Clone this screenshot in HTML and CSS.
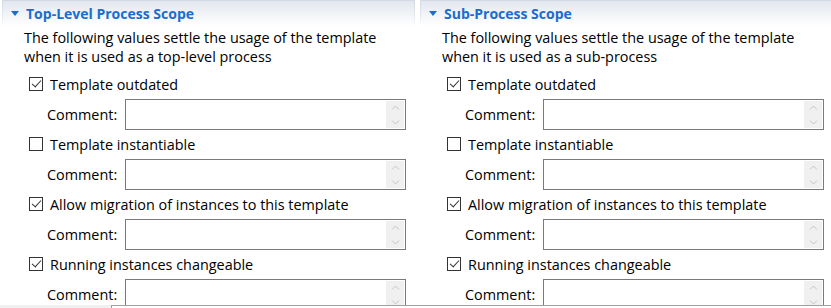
FILE: index.html
```html
<!doctype html>
<html lang="en">
<head>
<meta charset="utf-8" />
<title>Template Scope</title>
<link rel="stylesheet" href="styles.css">
</head>
<body>
<div class="scopes">
  <!-- Top-level scope -->
  <section class="scope">
    <div class="scope-head">
      <svg class="twisty" width="8" height="5" viewBox="0 0 8 5"><path d="M0 0h8L4 5z" /></svg>
      <span>Top-Level Process Scope</span>
    </div>
    <div class="scope-body">
      <p class="desc">The following values settle the usage of the template<br>when it is used as a top-level process</p>
      <div class="opt">
        <label class="check"><span class="box on"></span>Template outdated</label>
        <div class="comment"><span>Comment:</span><div class="memo"><div class="memo-bar"></div></div></div>
      </div>
      <div class="opt">
        <label class="check"><span class="box"></span>Template instantiable</label>
        <div class="comment"><span>Comment:</span><div class="memo"><div class="memo-bar"></div></div></div>
      </div>
      <div class="opt">
        <label class="check"><span class="box on"></span>Allow migration of instances to this template</label>
        <div class="comment"><span>Comment:</span><div class="memo"><div class="memo-bar"></div></div></div>
      </div>
      <div class="opt">
        <label class="check"><span class="box on"></span>Running instances changeable</label>
        <div class="comment"><span>Comment:</span><div class="memo"><div class="memo-bar"></div></div></div>
      </div>
    </div>
  </section>

  <!-- Sub-process scope -->
  <section class="scope">
    <div class="scope-head">
      <svg class="twisty" width="8" height="5" viewBox="0 0 8 5"><path d="M0 0h8L4 5z" /></svg>
      <span>Sub-Process Scope</span>
    </div>
    <div class="scope-body">
      <p class="desc">The following values settle the usage of the template<br>when it is used as a sub-process</p>
      <div class="opt">
        <label class="check"><span class="box on"></span>Template outdated</label>
        <div class="comment"><span>Comment:</span><div class="memo"><div class="memo-bar"></div></div></div>
      </div>
      <div class="opt">
        <label class="check"><span class="box"></span>Template instantiable</label>
        <div class="comment"><span>Comment:</span><div class="memo"><div class="memo-bar"></div></div></div>
      </div>
      <div class="opt">
        <label class="check"><span class="box on"></span>Allow migration of instances to this template</label>
        <div class="comment"><span>Comment:</span><div class="memo"><div class="memo-bar"></div></div></div>
      </div>
      <div class="opt">
        <label class="check"><span class="box on"></span>Running instances changeable</label>
        <div class="comment"><span>Comment:</span><div class="memo"><div class="memo-bar"></div></div></div>
      </div>
    </div>
  </section>
</div>
<!-- bottom strip of the next panel peeking in -->
<div class="below"><div class="below-tab"></div><div class="below-box"></div></div>
</body>
</html>
```
FILE: styles.css
```css
:root{
  --head-top:#e2e7ef;
  --title:#1a6dcf;
  --edge:#d3d9e2;
  --memo-border:#7a7a7a;
  --bar:#f0f0f0;
  --chev:#c4c4c4;
}
*{box-sizing:border-box;margin:0;padding:0}
html,body{height:100%;overflow:hidden;background:#fff}
body{font-family:"Open Sans","Noto Sans",sans-serif;font-size:14.4px;color:#000;position:relative}

.scopes{display:grid;grid-template-columns:413px 413px;gap:5px;padding-left:2px}

.scope-head{
  height:26px;display:flex;align-items:center;gap:7px;padding-left:8px;
  background:linear-gradient(var(--head-top),#fff);
  border-radius:3px 3px 0 0;
  border:1px solid transparent;border-bottom:0;
  border-image:linear-gradient(var(--edge),rgba(255,255,255,0)) 1;
  color:var(--title);font-weight:700;font-size:14px;
}
.twisty{fill:var(--title)}

.scope-body{padding-left:22px}
.desc{line-height:19px;margin-top:2px;margin-bottom:8px}

.opt{display:flex;flex-direction:column;gap:5px;margin-bottom:4px}
.check{display:flex;align-items:center;gap:7px;height:20px;padding-left:5px}
.box{width:14px;height:14px;border:1px solid #333;background:#fff;position:relative}
.box.on::after{
  content:"";position:absolute;left:3.5px;top:0px;width:4px;height:8px;
  border:solid #333;border-width:0 1px 1px 0;transform:rotate(42deg);
}

.comment{display:flex;align-items:center;padding-left:23px}
.comment span{width:78px}
.memo{width:281px;height:31px;border:1px solid var(--memo-border);display:flex;justify-content:flex-end;padding:1px}
.memo-bar{
  width:18px;background:var(--bar);
  background-image:
    url("data:image/svg+xml;utf8,<svg xmlns='http://www.w3.org/2000/svg' width='9' height='5'><path d='M1 4.5L4.5 1 8 4.5' fill='none' stroke='%23c4c4c4'/></svg>"),
    url("data:image/svg+xml;utf8,<svg xmlns='http://www.w3.org/2000/svg' width='9' height='5'><path d='M1 .5L4.5 4 8 .5' fill='none' stroke='%23c4c4c4'/></svg>");
  background-repeat:no-repeat;
  background-position:center 4px,center 19px;
}

.below{position:absolute;left:0;right:0;top:305px;height:10px;display:flex}
.below-tab{width:111px;background:var(--bar)}
.below-box{flex:1;border-top:1px solid #a0a0a0;border-left:1px solid #a0a0a0;background:#fff}
```
